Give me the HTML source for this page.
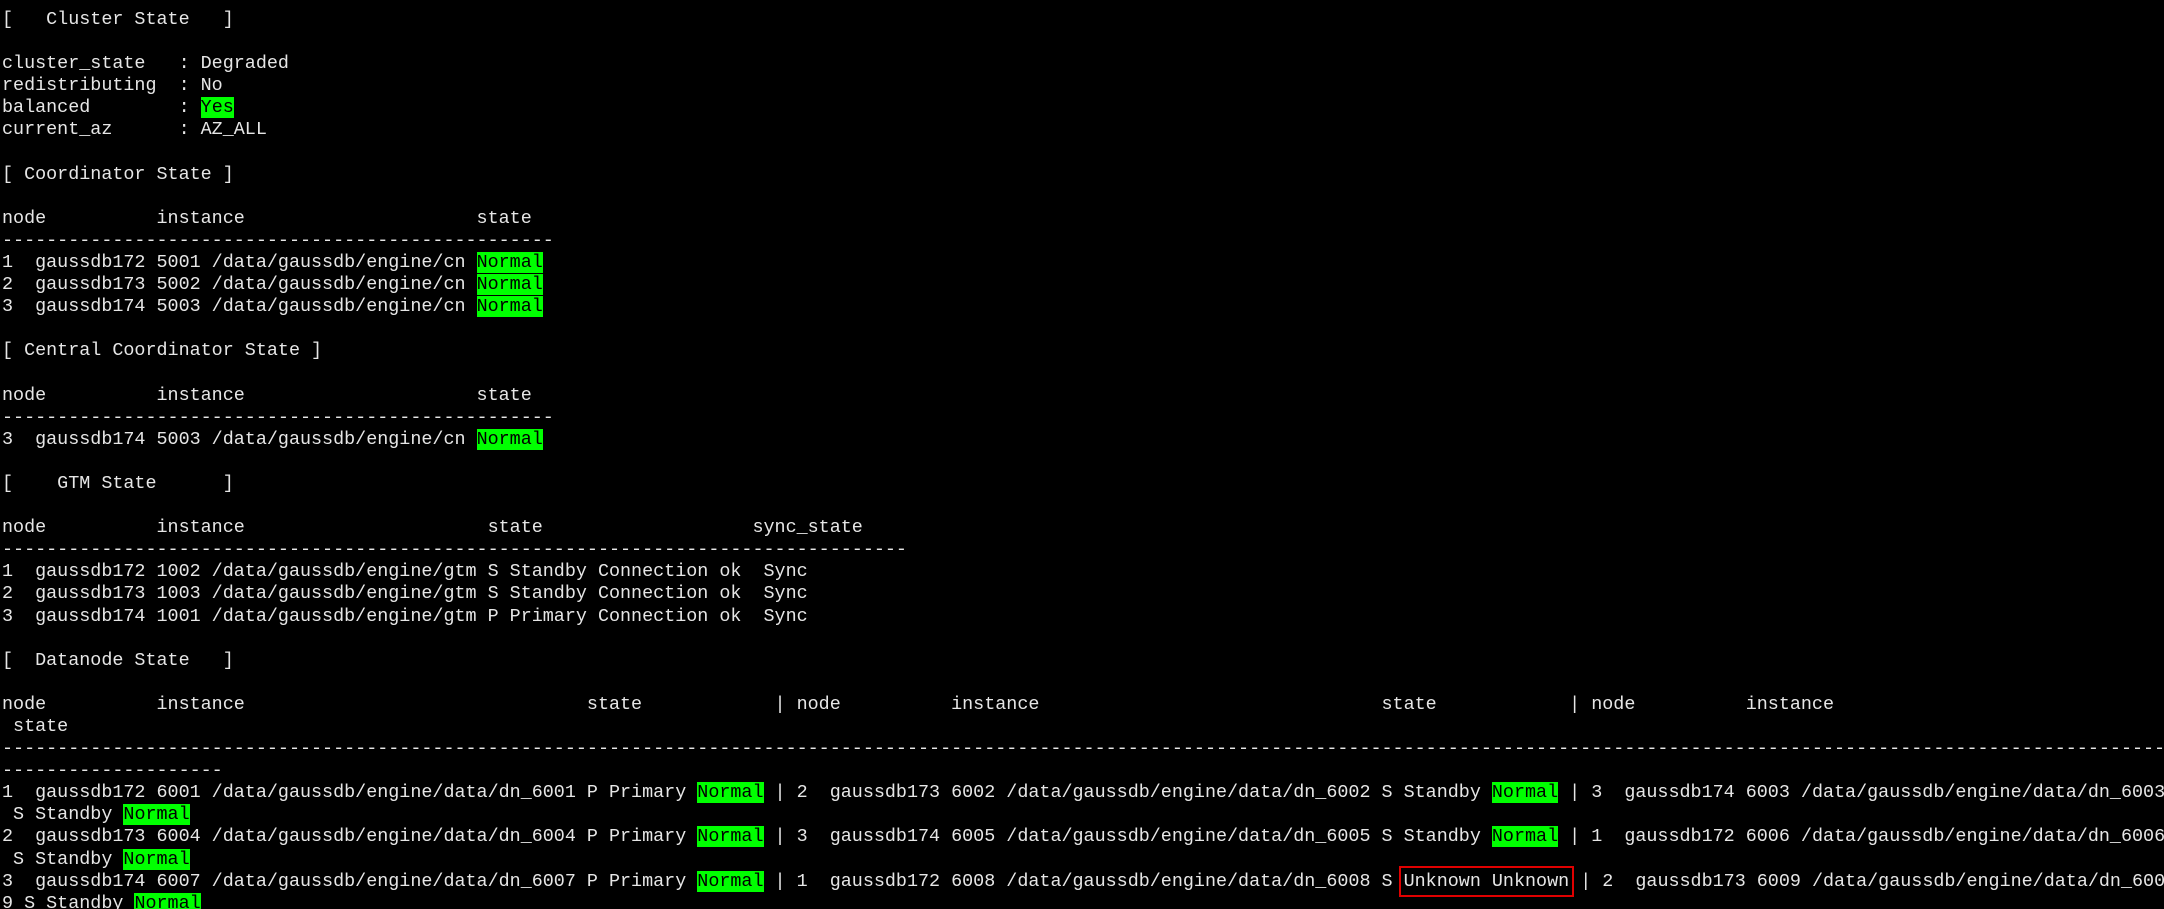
<!DOCTYPE html>
<html><head><meta charset="utf-8"><style>
html,body{margin:0;padding:0;background:#000;width:2164px;height:909px;overflow:hidden}
pre{margin:0;padding:9px 0 0 2px;font-family:"Liberation Mono","DejaVu Sans Mono",monospace;font-size:18.4px;line-height:22.1px;color:#e6e6e6;white-space:pre}
.g{background:#00ff00;color:#000}
.r{outline:2px solid #e00000;outline-offset:3px}
</style></head><body><pre>[   Cluster State   ]

cluster_state   : Degraded
redistributing  : No
balanced        : <span class="g">Yes</span>
current_az      : AZ_ALL

[ Coordinator State ]

node          instance                     state
--------------------------------------------------
1  gaussdb172 5001 /data/gaussdb/engine/cn <span class="g">Normal</span>
2  gaussdb173 5002 /data/gaussdb/engine/cn <span class="g">Normal</span>
3  gaussdb174 5003 /data/gaussdb/engine/cn <span class="g">Normal</span>

[ Central Coordinator State ]

node          instance                     state
--------------------------------------------------
3  gaussdb174 5003 /data/gaussdb/engine/cn <span class="g">Normal</span>

[    GTM State      ]

node          instance                      state                   sync_state
----------------------------------------------------------------------------------
1  gaussdb172 1002 /data/gaussdb/engine/gtm S Standby Connection ok  Sync
2  gaussdb173 1003 /data/gaussdb/engine/gtm S Standby Connection ok  Sync
3  gaussdb174 1001 /data/gaussdb/engine/gtm P Primary Connection ok  Sync

[  Datanode State   ]

node          instance                               state            | node          instance                               state            | node          instance
 state
----------------------------------------------------------------------------------------------------------------------------------------------------------------------------------------------------
--------------------
1  gaussdb172 6001 /data/gaussdb/engine/data/dn_6001 P Primary <span class="g">Normal</span> | 2  gaussdb173 6002 /data/gaussdb/engine/data/dn_6002 S Standby <span class="g">Normal</span> | 3  gaussdb174 6003 /data/gaussdb/engine/data/dn_6003
 S Standby <span class="g">Normal</span>
2  gaussdb173 6004 /data/gaussdb/engine/data/dn_6004 P Primary <span class="g">Normal</span> | 3  gaussdb174 6005 /data/gaussdb/engine/data/dn_6005 S Standby <span class="g">Normal</span> | 1  gaussdb172 6006 /data/gaussdb/engine/data/dn_6006
 S Standby <span class="g">Normal</span>
3  gaussdb174 6007 /data/gaussdb/engine/data/dn_6007 P Primary <span class="g">Normal</span> | 1  gaussdb172 6008 /data/gaussdb/engine/data/dn_6008 S <span class="r">Unknown Unknown</span> | 2  gaussdb173 6009 /data/gaussdb/engine/data/dn_600
9 S Standby <span class="g">Normal</span>
</pre></body></html>
